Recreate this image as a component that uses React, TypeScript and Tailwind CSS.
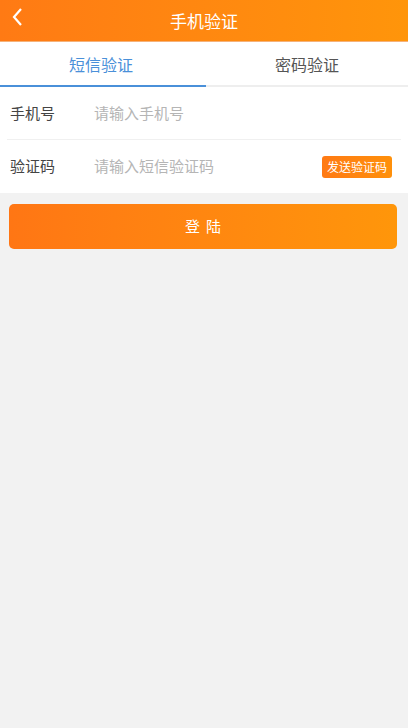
import React from 'react';

const font = { fontFamily: '"Noto Sans CJK SC", "Liberation Sans", sans-serif' };

export default function App() {
    return (
        <div className="min-h-[728px] bg-[#f2f2f2]" style={font}>
            <div className="h-[42px] bg-gradient-to-r from-[#ff7a14] to-[#ff950a] flex items-center relative border-b border-[#f5b27a]">
                <button className="absolute left-[5px] top-0 h-[34px] w-[24px] flex items-center justify-center">
                    <svg width="14" height="22" viewBox="0 0 14 22" fill="none">
                        <path d="M11 3 L4 11 L11 19" stroke="white" strokeWidth="2.2" />
                    </svg>
                </button>
                <h1 className="flex-1 text-center text-white text-[17px] leading-none">手机验证</h1>
            </div>

            <div className="flex bg-white h-[45px]">
                <div className="flex-1 flex items-center justify-center text-[16px] text-[#4a90d9] border-b-2 border-[#4a90d9] pr-[4px]">短信验证</div>
                <div className="flex-1 flex items-center justify-center text-[16px] text-[#555] border-b-2 border-[#eeeeee]">密码验证</div>
            </div>

            <div className="bg-white px-[7px]">
                <div className="flex items-center h-[53px] border-b border-[#f0f0f0]">
                    <span className="w-[87px] pl-[3px] text-[15px] text-[#444]">手机号</span>
                    <span className="text-[15px] text-[#b5b5b5]">请输入手机号</span>
                </div>
                <div className="flex items-center h-[53px]">
                    <span className="w-[87px] pl-[3px] text-[15px] text-[#444]">验证码</span>
                    <span className="flex-1 text-[15px] text-[#b5b5b5]">请输入短信验证码</span>
                    <button className="mr-[9px] h-[22px] px-[5px] rounded-[3px] bg-gradient-to-r from-[#ff7a14] to-[#ff900a] text-white text-[12px] leading-none">发送验证码</button>
                </div>
            </div>

            <div className="pl-[9px] pr-[11px] pt-[11px]">
                <button className="w-full h-[45px] rounded-[5px] bg-gradient-to-r from-[#ff7614] to-[#ff960a] text-white text-[15px] tracking-[6px] pl-[6px]">登陆</button>
            </div>
        </div>
    );
}
